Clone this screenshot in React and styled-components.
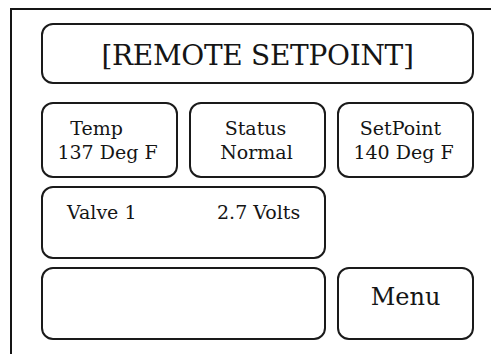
import React from "react";
import styled, { createGlobalStyle } from "styled-components";

const Global = createGlobalStyle`
  html, body {
    margin: 0;
    padding: 0;
    overflow: hidden;
    background: #ffffff;
  }
  body {
    font-family: "DejaVu Serif", serif;
    color: #151515;
  }
`;

const Frame = styled.div`
  margin: 8px 0 0 10px;
  width: 481px;
  height: 346px;
  border-left: 2px solid #151515;
  border-top: 2px solid #151515;
  box-sizing: border-box;
  padding: 13px 0 0 29px;
`;

const Panel = styled.div`
  width: 433px;
  display: flex;
  flex-direction: column;
`;

const Box = styled.div`
  box-sizing: border-box;
  border: 2px solid #1a1a1a;
  border-radius: 12px;
  background: #ffffff;
  grid-column: span ${(p) => p.$span || 1};
`;

const TitleBox = styled(Box)`
  height: 61px;
  margin-bottom: 18px;
  display: flex;
  align-items: center;
  justify-content: center;
  font-size: 28px;
  letter-spacing: -0.3px;
  padding-top: 4px;
`;

const Grid = styled.div`
  display: grid;
  grid-template-columns: 137px 137px 137px;
  grid-template-rows: 76px 73px 73px;
  column-gap: 11px;
  row-gap: 8px;
`;

const InfoBox = styled(Box)`
  padding-top: 12px;
  font-size: 19px;
  line-height: 24px;
  text-align: center;
`;

const Line = styled.div`
  white-space: pre;
  padding-right: ${(p) => p.$pr || 0}px;
`;

const ValveBox = styled(Box)`
  padding: 12px 0 0 24px;
  font-size: 19px;
  line-height: 24px;
  display: grid;
  grid-template-columns: 150px auto;
  align-content: start;
`;

const MenuBox = styled(Box)`
  padding-top: 14px;
  font-size: 24px;
  line-height: 29px;
  text-align: center;
`;

export default function App() {
  return (
    <>
      <Global />
      <Frame>
        <Panel>
          <TitleBox>[REMOTE SETPOINT]</TitleBox>
          <Grid>
            <InfoBox>
              <Line $pr={26}>Temp</Line>
              <Line $pr={4}>137 Deg F</Line>
            </InfoBox>
            <InfoBox>
              <Line $pr={4}>Status</Line>
              <Line $pr={2}>Normal</Line>
            </InfoBox>
            <InfoBox>
              <Line $pr={10}>SetPoint</Line>
              <Line $pr={4}>140 Deg F</Line>
            </InfoBox>
            <ValveBox $span={2}>
              <span>Valve 1</span>
              <span>2.7 Volts</span>
            </ValveBox>
            <div />
            <Box $span={2} />
            <MenuBox>Menu</MenuBox>
          </Grid>
        </Panel>
      </Frame>
    </>
  );
}
